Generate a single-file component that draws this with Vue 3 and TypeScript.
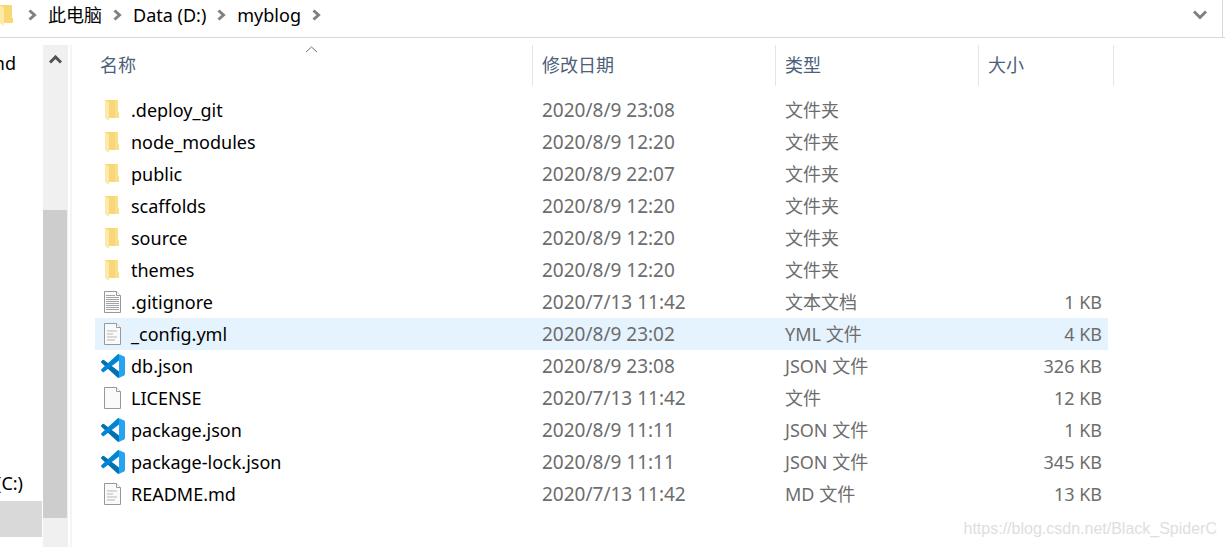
<script setup lang="ts">
type IconKind = 'folder' | 'text' | 'config' | 'code' | 'blank'

interface Entry {
  name: string
  modified: string
  type: string
  size?: string
  icon: IconKind
  selected?: boolean
}

const crumbs: string[] = ['此电脑', 'Data (D:)', 'myblog']

const entries: Entry[] = [
  { name: '.deploy_git', modified: '2020/8/9 23:08', type: '文件夹', icon: 'folder' },
  { name: 'node_modules', modified: '2020/8/9 12:20', type: '文件夹', icon: 'folder' },
  { name: 'public', modified: '2020/8/9 22:07', type: '文件夹', icon: 'folder' },
  { name: 'scaffolds', modified: '2020/8/9 12:20', type: '文件夹', icon: 'folder' },
  { name: 'source', modified: '2020/8/9 12:20', type: '文件夹', icon: 'folder' },
  { name: 'themes', modified: '2020/8/9 12:20', type: '文件夹', icon: 'folder' },
  { name: '.gitignore', modified: '2020/7/13 11:42', type: '文本文档', size: '1 KB', icon: 'text' },
  { name: '_config.yml', modified: '2020/8/9 23:02', type: 'YML 文件', size: '4 KB', icon: 'config', selected: true },
  { name: 'db.json', modified: '2020/8/9 23:08', type: 'JSON 文件', size: '326 KB', icon: 'code' },
  { name: 'LICENSE', modified: '2020/7/13 11:42', type: '文件', size: '12 KB', icon: 'blank' },
  { name: 'package.json', modified: '2020/8/9 11:11', type: 'JSON 文件', size: '1 KB', icon: 'code' },
  { name: 'package-lock.json', modified: '2020/8/9 11:11', type: 'JSON 文件', size: '345 KB', icon: 'code' },
  { name: 'README.md', modified: '2020/7/13 11:42', type: 'MD 文件', size: '13 KB', icon: 'config' },
]
</script>

<template>
  <div class="explorer">
    <nav class="address" aria-label="路径">
      <svg class="address-folder" width="14" height="24" viewBox="0 0 14 24" aria-hidden="true">
        <path d="M0 2H12V15H13V20H0Z" fill="#f8d775" />
        <path d="M0 2L4 5V23L0 20Z" fill="#ffe9a6" />
      </svg>
      <svg class="sep" width="9" height="12" viewBox="0 0 9 12" aria-hidden="true"><path d="M1.5 1.5L6.5 6L1.5 10.5" /></svg>
      <template v-for="crumb in crumbs" :key="crumb">
        <button type="button" class="crumb">{{ crumb }}</button>
        <svg class="sep" width="9" height="12" viewBox="0 0 9 12" aria-hidden="true"><path d="M1.5 1.5L6.5 6L1.5 10.5" /></svg>
      </template>
      <button type="button" class="history" aria-label="历史记录">
        <svg width="16" height="10" viewBox="0 0 16 10" aria-hidden="true"><path d="M2 1.5L8 7.5L14 1.5" /></svg>
      </button>
    </nav>

    <div class="body">
      <aside class="sidebar">
        <div class="place first">nd</div>
        <div class="place drive">(C:)</div>
        <div class="place current"></div>
      </aside>
      <div class="scrollbar">
        <button type="button" class="scroll-up" aria-label="向上滚动">
          <svg width="13" height="10" viewBox="0 0 13 10" aria-hidden="true"><path d="M1 7.5L6.5 2L12 7.5" /></svg>
        </button>
        <div class="thumb"></div>
      </div>

      <main class="files">
        <table>
          <colgroup>
            <col /><col class="c-date" /><col class="c-type" /><col class="c-size" /><col class="c-end" />
          </colgroup>
          <thead>
            <tr>
              <th scope="col">
                <button type="button">名称</button>
                <svg class="sort" width="13" height="7" viewBox="0 0 13 7" aria-hidden="true"><path d="M1 6L6.5 1L12 6" /></svg>
              </th>
              <th scope="col"><button type="button">修改日期</button></th>
              <th scope="col"><button type="button">类型</button></th>
              <th scope="col"><button type="button">大小</button></th>
              <td></td>
            </tr>
          </thead>
          <tbody>
            <tr v-for="entry in entries" :key="entry.name" :class="{ selected: entry.selected }">
              <td class="name">
                <div class="name-inner">
                  <svg v-if="entry.icon === 'folder'" width="26" height="26" viewBox="0 0 26 26" aria-hidden="true">
                    <path d="M5 3H18V15H19V21H5Z" fill="#f8d778" />
                    <path d="M15 3H18V15H19V21H15Z" fill="#fbdf88" />
                    <path d="M5 3L9 5.5V24L5 21Z" fill="#ffe9a8" />
                  </svg>
                  <svg v-else-if="entry.icon === 'code'" width="26" height="26" viewBox="0 0 26 26" aria-hidden="true">
                    <g transform="translate(1 1)">
                      <path d="M.327 7.261L1.65 6.059A1 1 0 0 1 2.925 6.002L18.004 17.448V23.9Q17.2 24 16.506 23.5L.326 8.74A1 1 0 0 1 .327 7.261Z" fill="#0070b5" />
                      <path d="M.327 16.739L1.65 17.941A1 1 0 0 0 2.925 17.998L18.004 6.552V.1Q17.2 0 16.506 .5L.326 15.26A1 1 0 0 0 .327 16.739Z" fill="#0086d2" />
                      <path d="M18.21 .21L23.15 2.587A1.5 1.5 0 0 1 24 3.939V20.06A1.5 1.5 0 0 1 23.15 21.413L18.21 23.79A1.5 1.5 0 0 1 16.506 23.5Q18.004 24 18.004 22.5V1.5Q18.004 0 16.506 .5A1.5 1.5 0 0 1 18.21 .21Z" fill="#27a4ef" />
                    </g>
                  </svg>
                  <svg v-else width="26" height="26" viewBox="0 0 26 26" aria-hidden="true">
                    <path d="M4.5 2.5H16.5L20.5 6.5V23.5H4.5Z" fill="#f9fafb" stroke="#989898" />
                    <path d="M16.5 2.5V6.5H20.5" fill="#fff" stroke="#989898" />
                    <path v-if="entry.icon === 'text'" d="M6 6.5H15M6 8.5H19M6 10.5H19M6 12.5H19M6 14.5H19M6 16.5H19M6 18.5H19M6 20.5H19" stroke="#a2a4a6" />
                    <path v-else-if="entry.icon === 'config'" d="M7 10H17M7 13H13M7 16H17M7 19H15" stroke="#cccecf" stroke-width="1.5" />
                  </svg>
                  <span>{{ entry.name }}</span>
                </div>
              </td>
              <td class="date">{{ entry.modified }}</td>
              <td class="type">{{ entry.type }}</td>
              <td class="size">{{ entry.size }}</td>
              <td class="end"></td>
            </tr>
          </tbody>
        </table>
      </main>
    </div>
    <div class="watermark">https://blog.csdn.net/Black_SpiderC</div>
  </div>
</template>

<style>
body {
  margin: 0;
  background: #fff;
}
</style>

<style scoped>
.explorer {
  position: relative;
  display: flex;
  flex-direction: column;
  min-height: 100vh;
  overflow: hidden;
  color: #000;
  font-family: "Noto Sans", "Noto Sans CJK SC", sans-serif;
  font-size: 18px;
}
button {
  padding: 0;
  border: 0;
  background: none;
  color: inherit;
  font: inherit;
}
svg {
  display: block;
  flex: none;
}
.address {
  position: relative;
  display: flex;
  align-items: center;
  height: 30px;
  margin-right: 2px;
  padding-bottom: 7px;
  border-right: 1px solid #d9d9d9;
}
.address::after {
  content: "";
  position: absolute;
  left: 0;
  right: -3px;
  bottom: -1px;
  height: 1px;
  background: #d9d9d9;
}
.address-folder {
  margin-right: 14px;
}
.sep path,
.history path {
  fill: none;
  stroke: #808080;
  stroke-width: 3;
}
.crumb {
  margin: 0 11px;
  line-height: 28px;
}
.history {
  margin-left: auto;
  margin-right: 14px;
}
.body {
  display: flex;
  flex: 1;
  padding-top: 8px;
}
.sidebar {
  display: flex;
  flex-direction: column;
  width: 42px;
  margin-right: 1px;
  overflow: hidden;
}
.place {
  display: flex;
  flex: none;
  justify-content: flex-end;
  height: 36px;
  line-height: 36px;
}
.first {
  padding-right: 26px;
}
.drive {
  margin-top: auto;
  padding-right: 19px;
}
.current {
  margin-bottom: 10px;
  background: #d9d9d9;
}
.scrollbar {
  display: flex;
  flex-direction: column;
  width: 25px;
  margin-right: 2px;
  background: #f0f0f0;
}
.scroll-up {
  display: flex;
  justify-content: center;
  align-items: center;
  height: 30px;
}
.scroll-up path {
  fill: none;
  stroke: #505050;
  stroke-width: 3;
}
.thumb {
  flex: 1;
  margin: 135px 1px 29px 0;
  background: #cdcdcd;
}
.files {
  flex: 1;
  padding: 0 111px 0 23px;
  border-left: 2px solid #f5f5f5;
}
table {
  width: 100%;
  table-layout: fixed;
  border-collapse: separate;
  border-spacing: 0;
}
.c-date {
  width: 243px;
}
.c-type {
  width: 203px;
}
.c-size {
  width: 130px;
}
.c-end {
  width: 6px;
}
th,
td {
  box-sizing: border-box;
  padding: 0;
  text-align: left;
  font-weight: 400;
  white-space: nowrap;
}
th,
thead td {
  position: relative;
  height: 41px;
}
th {
  padding-left: 10px;
  color: #4c607a;
}
th:first-child {
  padding-left: 5px;
}
th + th {
  box-shadow: inset 1px 0 #e5e5e5;
}
thead td {
  box-shadow: inset -1px 0 #e5e5e5;
}
th button {
  display: block;
  line-height: 41px;
}
.sort {
  position: absolute;
  top: 1px;
  left: 50%;
  margin-left: -9px;
}
.sort path {
  fill: none;
  stroke: #707070;
}
tbody::before {
  content: "";
  display: block;
  height: 8px;
}
tbody td {
  height: 32px;
  padding-left: 10px;
  color: #6d6d6d;
  line-height: 32px;
}
tbody .name {
  padding-left: 5px;
  color: #000;
}
.name-inner {
  display: flex;
  align-items: center;
  gap: 5px;
}
.date {
  font-size: 19px;
}
tbody .size {
  padding-right: 6px;
  text-align: right;
}
tbody .end {
  padding: 0;
}
.selected td:not(.end) {
  background: #e5f3ff;
}
.watermark {
  position: absolute;
  right: 8px;
  bottom: 8px;
  color: #dedede;
  font-family: "Liberation Sans", Arial, sans-serif;
  font-size: 16px;
  line-height: 20px;
}
</style>
